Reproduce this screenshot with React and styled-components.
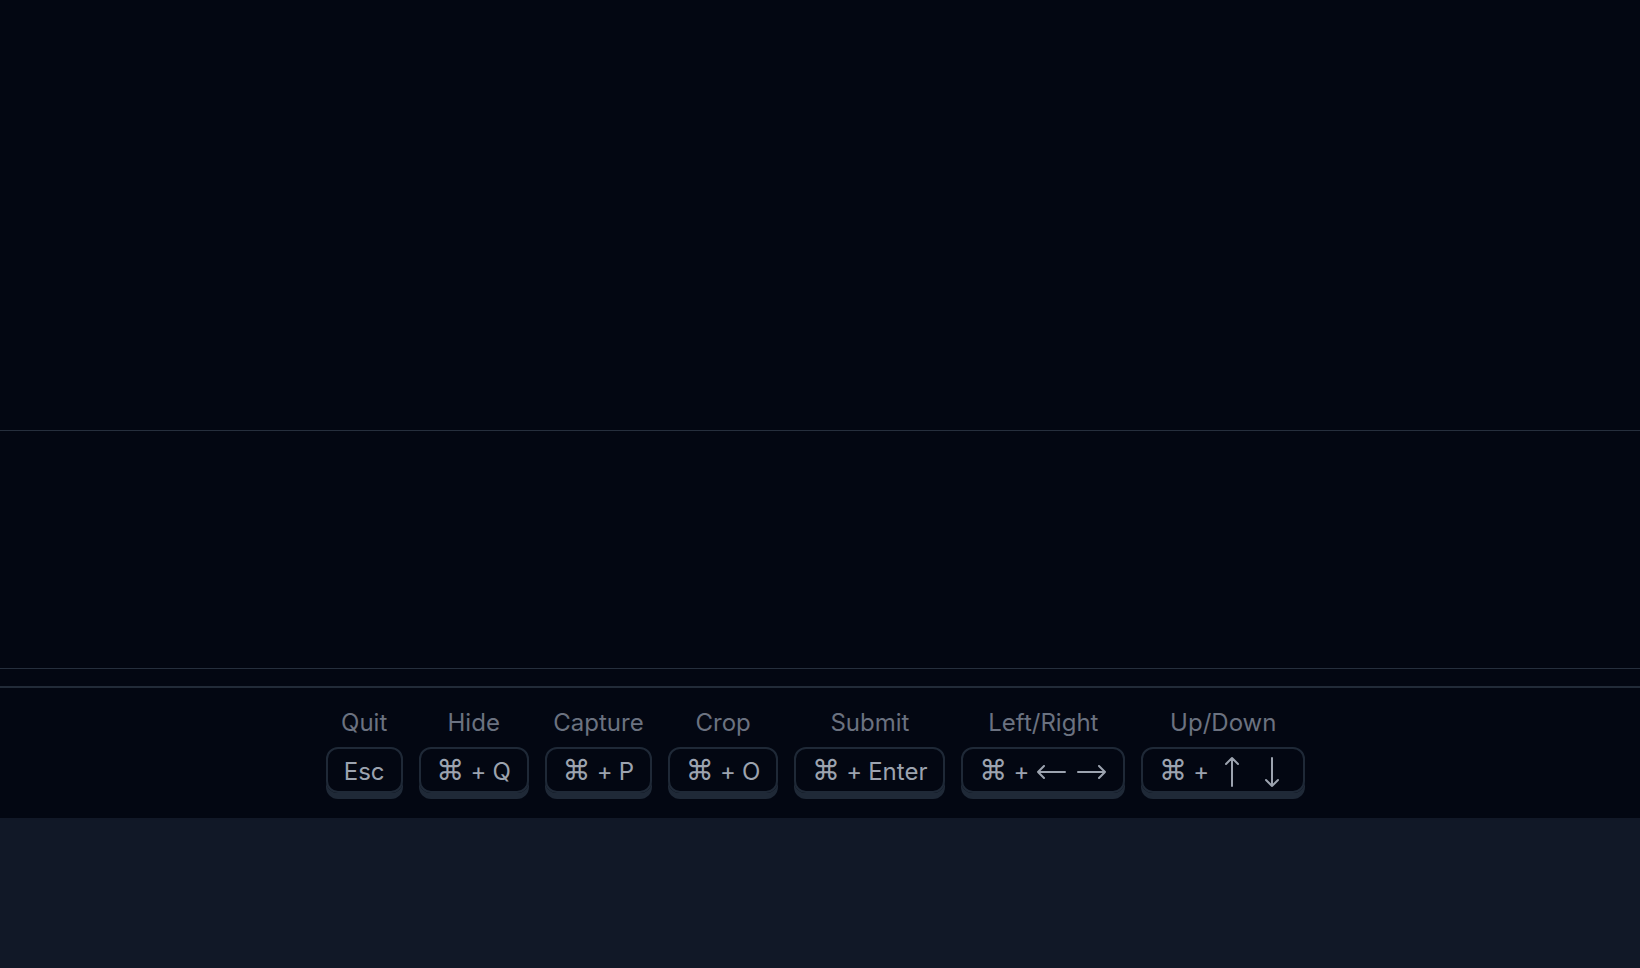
import styled, { createGlobalStyle } from "styled-components";

const GlobalStyle = createGlobalStyle`
  html, body {
    margin: 0;
    padding: 0;
    background-color: #111827;
    font-family: Inter, "Noto Sans", "DejaVu Sans", sans-serif;
  }
  * {
    box-sizing: border-box;
  }
`;

const Page = styled.div`
  display: flex;
  flex-direction: column;
  width: 100%;
  min-height: 100vh;
  background-color: #111827;
`;

const Panel = styled.div`
  height: ${(p) => p.$height}px;
  background-color: #030712;
  border-bottom: 1px solid #262f3d;
`;

const Spacer = styled.div`
  height: 17px;
  background-color: #030712;
`;

const Footer = styled.footer`
  background-color: #030712;
  border-top: 2px solid #222b38;
  padding: 21px 9px 19px 0;
  display: flex;
  justify-content: center;
`;

const Shortcuts = styled.div`
  display: flex;
  align-items: flex-start;
  gap: 16px;
`;

const Shortcut = styled.div`
  display: flex;
  flex-direction: column;
  align-items: center;
  gap: 10px;
`;

const Label = styled.span`
  font-size: 24px;
  line-height: 28px;
  color: #6b7280;
  white-space: nowrap;
`;

const Key = styled.div`
  height: 46px;
  padding: 4px ${(p) => p.$right || 16}px 0 16px;
  display: flex;
  align-items: center;
  gap: 6px;
  border: 2px solid #1f2937;
  border-radius: 12px;
  box-shadow: 0 6px 0 #1f2937;
  margin-bottom: 6px;
  font-size: 24px;
  line-height: 1;
  color: #9ca3af;
  white-space: nowrap;
`;

const Cmd = styled.span`
  font-family: "DejaVu Sans", sans-serif;
  font-size: 28px;
  margin-top: -3px;
`;

const ArrowSvg = styled.svg`
  flex: none;
  margin-left: ${(p) => p.$offset || 0}px;
`;

const Arrow = ({ dir, offset }) => {
  if (dir === "left" || dir === "right") {
    const d =
      dir === "left"
        ? "M29 7H2M8 1L2 7l6 6"
        : "M1 7h27M22 1l6 6-6 6";
    return (
      <ArrowSvg $offset={offset} width="30" height="14" viewBox="0 0 30 14" fill="none" stroke="#9ca3af" strokeWidth="2" strokeLinecap="round" strokeLinejoin="round">
        <path d={d} />
      </ArrowSvg>
    );
  }
  const d =
    dir === "up" ? "M7 30V2M1 8l6-6 6 6" : "M7 2v28M1 24l6 6 6-6";
  return (
    <ArrowSvg $offset={offset} width="14" height="32" viewBox="0 0 14 32" fill="none" stroke="#9ca3af" strokeWidth="2" strokeLinecap="round" strokeLinejoin="round">
      <path d={d} />
    </ArrowSvg>
  );
};

const shortcuts = [
  { label: "Quit", keys: ["Esc"] },
  { label: "Hide", keys: ["⌘", "+", "Q"] },
  { label: "Capture", keys: ["⌘", "+", "P"] },
  { label: "Crop", keys: ["⌘", "+", "O"] },
  { label: "Submit", keys: ["⌘", "+", "Enter"] },
  {
    label: "Left/Right",
    keys: ["⌘", "+"],
    arrows: [
      { dir: "left", offset: 1 },
      { dir: "right", offset: 5 },
    ],
  },
  {
    label: "Up/Down",
    keys: ["⌘", "+"],
    arrows: [
      { dir: "up", offset: 10 },
      { dir: "down", offset: 20 },
    ],
    right: 24,
  },
];

function App() {
  return (
    <Page>
      <GlobalStyle />
      <Panel $height={431} />
      <Panel $height={238} />
      <Spacer />
      <Footer>
        <Shortcuts>
          {shortcuts.map((s) => (
            <Shortcut key={s.label}>
              <Label>{s.label}</Label>
              <Key $right={s.right}>
                {s.keys.map((k, i) =>
                  k === "⌘" ? <Cmd key={i}>{k}</Cmd> : <span key={i}>{k}</span>
                )}
                {s.arrows &&
                  s.arrows.map((a) => (
                    <Arrow key={a.dir} dir={a.dir} offset={a.offset} />
                  ))}
              </Key>
            </Shortcut>
          ))}
        </Shortcuts>
      </Footer>
    </Page>
  );
}

export default App;
